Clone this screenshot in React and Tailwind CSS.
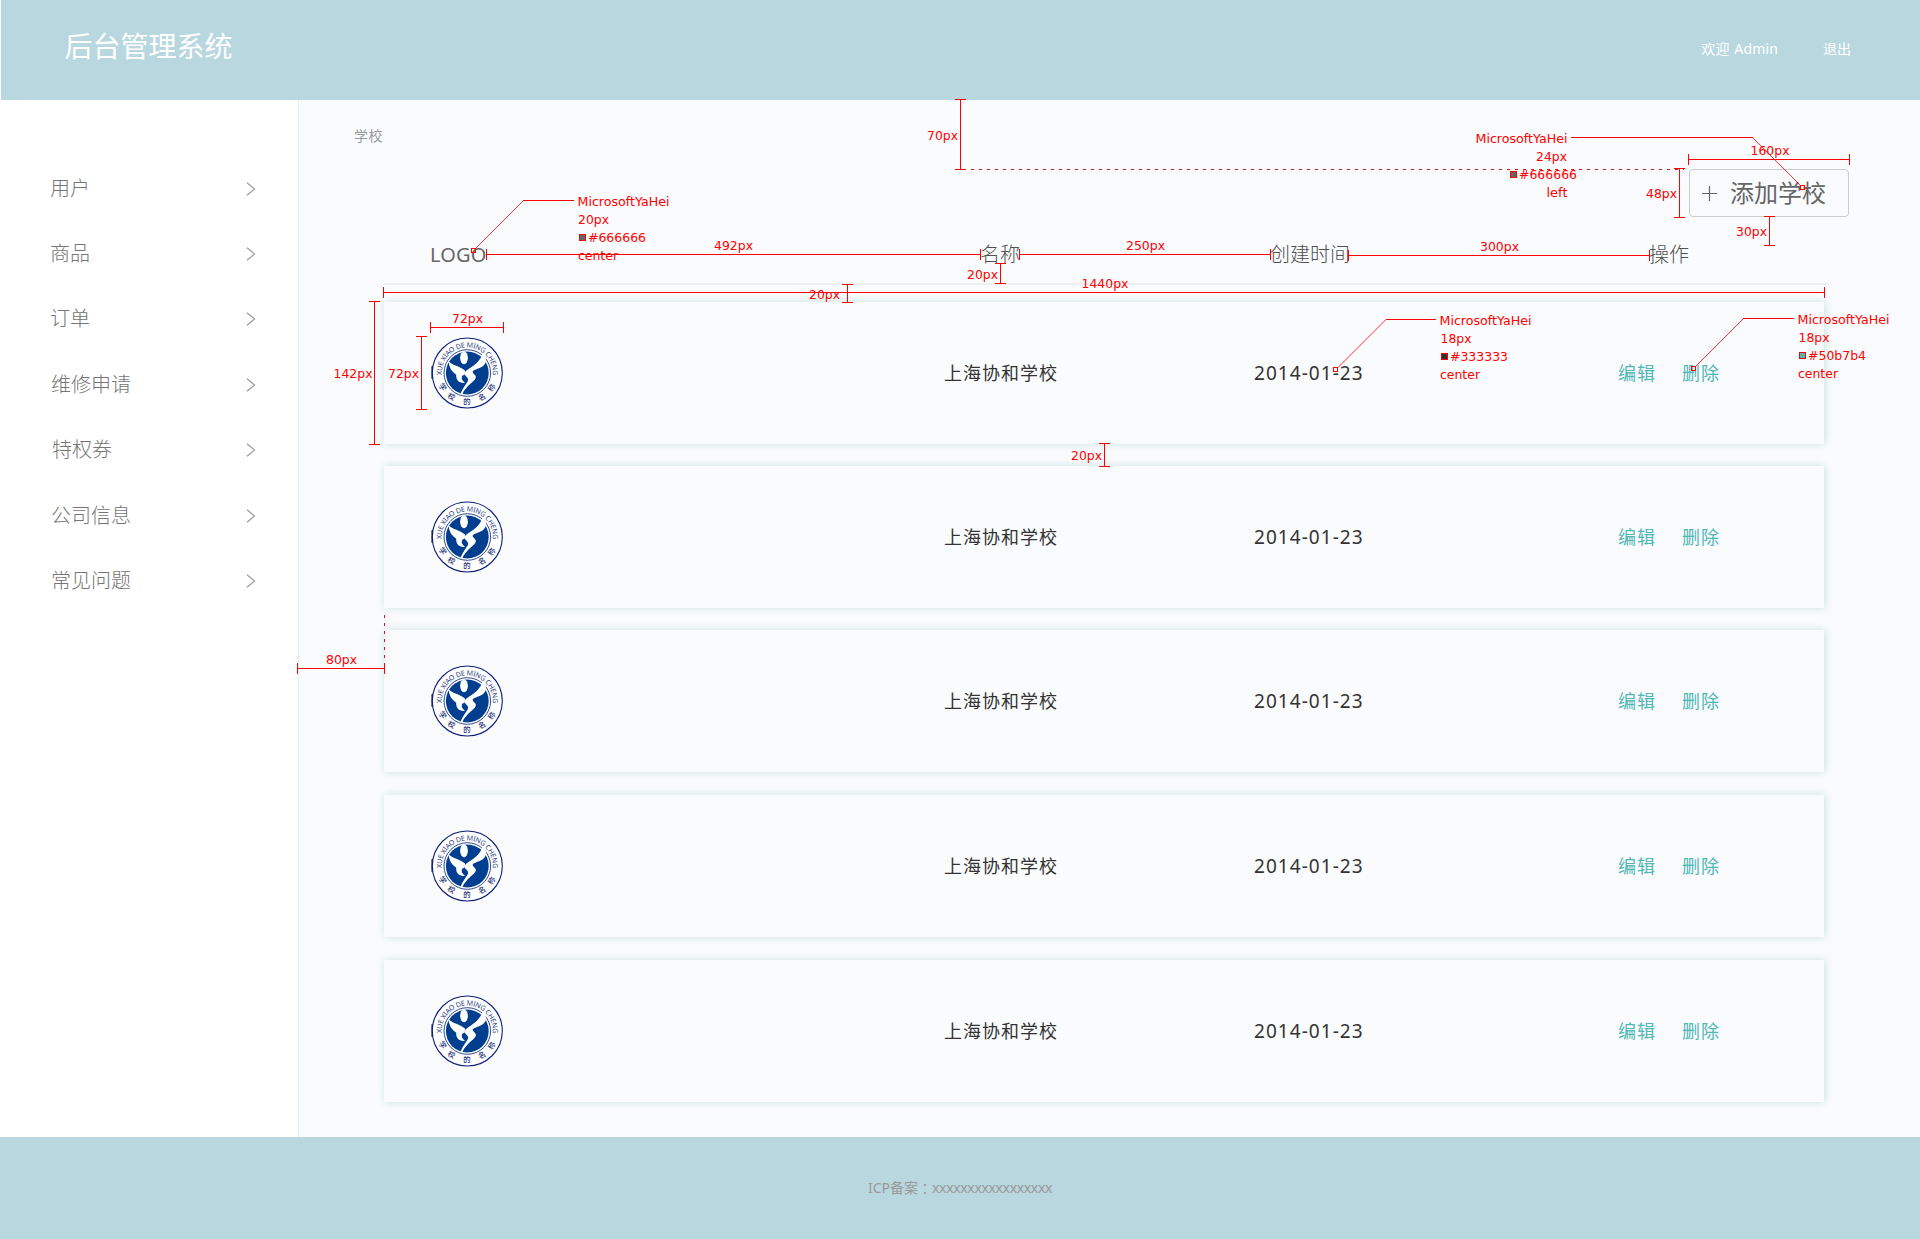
const menu = [
  { label: "用户", pad: "pl-[50px]" },
  { label: "商品", pad: "pl-[50px]" },
  { label: "订单", pad: "pl-[50px]" },
  { label: "维修申请", pad: "pl-[51px]" },
  { label: "特权券", pad: "pl-[52px]" },
  { label: "公司信息", pad: "pl-[51px]" },
  { label: "常见问题", pad: "pl-[51px]" },
];

const rows = [
  { name: "上海协和学校", date: "2014-01-23", gap: "mt-[17px]" },
  { name: "上海协和学校", date: "2014-01-23", gap: "mt-[22px]" },
  { name: "上海协和学校", date: "2014-01-23", gap: "mt-[22px]" },
  { name: "上海协和学校", date: "2014-01-23", gap: "mt-[23px]" },
  { name: "上海协和学校", date: "2014-01-23", gap: "mt-[23px]" },
];

function Chevron() {
  return (
    <svg width="10" height="14" viewBox="0 0 10 14" fill="none" stroke="#999" strokeWidth="1.1">
      <path d="M1 0.8 L8.6 7 L1 13.2" />
    </svg>
  );
}

function SchoolLogo({ id }) {
  return (
    <svg width="72" height="72" viewBox="0 0 72 72" className="block">
      <defs>
        <path id={`${id}-top`} d="M11.12 40 A25.5 25.5 0 1 1 61.48 40" />
      </defs>
      <rect x="0.4" y="29" width="1.6" height="13" rx="0.8" fill="#1c2433" />
      <circle cx="36.3" cy="36" r="35" fill="#fff" stroke="#0d1c78" strokeWidth="1.1" />
      <circle cx="36.3" cy="36" r="23.3" fill="#fff" stroke="#1b3480" strokeWidth="0.9" />
      <circle cx="36.3" cy="36" r="21.4" fill="#003f8f" />
      <ellipse cx="33" cy="20.8" rx="3.9" ry="6.4" fill="#fff" />
      <path
        fill="#fff"
        d="M17.6 24.6 C22 28.6 28.5 29.2 34 33.6 L33.8 37.4 L31.2 38.8 C30 41.5 31 44 34.2 45.8 C28.5 46.6 24.8 43.4 25.2 37.8 C23.5 36.2 18.5 34 17.6 24.6 Z"
      />
      <path
        fill="#fff"
        d="M51.5 17 C55.8 20.5 56.4 25 52.4 28.8 C49 31.6 43.5 32.4 41.8 34.2 C40.8 36.4 45.6 37.6 44.8 40.8 C43.6 45 35.5 48 31.2 57.4 L29.6 57 C31.2 51.5 35.6 47.2 37 43.6 C38.2 40.6 33.6 39.2 33.6 36.4 C34 32 47 29.5 51.5 17 Z"
      />
      <text fill="#27407f" fontFamily="'Noto Sans', sans-serif" fontSize="7" letterSpacing="-0.22">
        <textPath href={`#${id}-top`} startOffset="50%" textAnchor="middle">
          XUE XIAO DE MING CHENG
        </textPath>
      </text>
      <g fill="#1b2f78" fontFamily="'Noto Sans CJK SC', sans-serif" fontSize="7.4" fontWeight="500" textAnchor="middle">
        <text transform="translate(12 50.4) rotate(58) translate(0 2.6)">学</text>
        <text transform="translate(21 60) rotate(28) translate(0 2.6)">校</text>
        <text transform="translate(36.4 64.2) translate(0 2.6)">的</text>
        <text transform="translate(51.5 60) rotate(-28) translate(0 2.6)">名</text>
        <text transform="translate(61 50.2) rotate(-58) translate(0 2.6)">称</text>
      </g>
    </svg>
  );
}

/* Horizontal measure with end ticks */
function HMeasure({ x1, x2, y, t = y - 5, b = y + 6 }) {
  return <path d={`M${x1} ${y + 0.5}H${x2 + 1}M${x1 + 0.5} ${t}V${b}M${x2 + 0.5} ${t}V${b}`} />;
}

/* Vertical measure with end ticks */
function VMeasure({ x, y1, y2 }) {
  return <path d={`M${x + 0.5} ${y1}V${y2 + 1}M${x - 5} ${y1 + 0.5}H${x + 6}M${x - 5} ${y2 + 0.5}H${x + 6}`} />;
}

const labels = [
  ["70px", 927, 140, 31],
  ["160px", 1750.5, 155, 39],
  ["48px", 1646, 198, 31],
  ["30px", 1736, 236, 31],
  ["492px", 714, 250, 39],
  ["250px", 1126, 250, 39],
  ["300px", 1480, 251, 39],
  ["20px", 967, 279, 31],
  ["1440px", 1081.5, 288, 47],
  ["20px", 809, 299, 31],
  ["72px", 452, 323, 31],
  ["142px", 333.5, 378, 39],
  ["72px", 388, 378, 31],
  ["20px", 1071, 460, 31],
  ["80px", 326, 664, 31],
  ["MicrosoftYaHei", 577.5, 206, 92],
  ["20px", 578, 224, 31],
  ["#666666", 588, 242, 58],
  ["center", 578, 260, 40],
  ["MicrosoftYaHei", 1475.5, 143, 92],
  ["24px", 1536, 161, 31],
  ["#666666", 1519, 179, 58],
  ["left", 1546.5, 197, 21],
  ["MicrosoftYaHei", 1439.5, 325, 92],
  ["18px", 1440.5, 343, 31],
  ["#333333", 1450, 361, 58],
  ["center", 1440, 379, 40],
  ["MicrosoftYaHei", 1797.5, 324, 92],
  ["18px", 1798.5, 342, 31],
  ["#50b7b4", 1808, 360, 58],
  ["center", 1798, 378, 40],
];

function Annotations() {
  return (
    <svg className="absolute top-0 left-0 pointer-events-none" width="1920" height="1239" viewBox="0 0 1920 1239">
      <g stroke="#f00" strokeWidth="1" fill="none" shapeRendering="crispEdges">
        <VMeasure x={960} y1={99} y2={169} />
        <HMeasure x1={1688} x2={1849} y={159} />
        <VMeasure x={1679} y1={168} y2={217} />
        <VMeasure x={1769} y1={216} y2={245} />
        <HMeasure x1={486} x2={980} y={254} />
        <HMeasure x1={1019} x2={1270} y={254} />
        <HMeasure x1={1348} x2={1649} y={255} />
        <VMeasure x={1000} y1={263} y2={283} />
        <HMeasure x1={383} x2={1824} y={292} />
        <VMeasure x={847} y1={284} y2={302} />
        <HMeasure x1={430} x2={503} y={327} />
        <VMeasure x={421} y1={336} y2={409} />
        <VMeasure x={374} y1={301} y2={444} />
        <VMeasure x={1104} y1={443} y2={466} />
        <HMeasure x1={297} x2={384} y={668} />
        <path d="M523 200.5H574M1571 137.5H1753M1386 319.5H1436M1743 318.5H1794" />
        <path stroke="#d11" strokeDasharray="3 5" d="M963 169.5H1684M384.5 615V664" />
        <rect x="471.5" y="248.5" width="4" height="4" />
        <rect x="1800.5" y="185.5" width="4" height="4" />
        <rect x="1333.5" y="367.5" width="4" height="4" />
        <rect x="1691.5" y="366.5" width="4" height="4" />
        <rect x="579.5" y="234.5" width="6" height="6" fill="#666" />
        <rect x="1510.5" y="171.5" width="6" height="6" fill="#666" />
        <rect x="1441.5" y="353.5" width="6" height="6" fill="#333" />
        <rect x="1799.5" y="352.5" width="6" height="6" fill="#50b7b4" />
      </g>
      <path stroke="#f00" strokeWidth="0.8" fill="none" d="M476 248L523.5 200.5M1752.5 137.5L1801 186M1338 367.5L1386 319.5M1696 366L1743.5 318.5" />
      <g fill="#f00" fontFamily="'DejaVu Sans', sans-serif" fontSize="12">
        {labels.map(([text, x, y, w], i) => (
          <text key={i} x={x} y={y} textLength={w} lengthAdjust="spacingAndGlyphs">
            {text}
          </text>
        ))}
      </g>
    </svg>
  );
}

export default function App() {
  return (
    <div className="relative flex h-[1239px] w-[1920px] flex-col overflow-hidden bg-white font-['Noto_Sans','Noto_Sans_CJK_SC',sans-serif]">
      <header className="ml-px flex h-[100px] shrink-0 justify-between bg-[#b9d7df] pr-[69px] pl-[63.5px] text-white">
        <h1 className="mt-[25px] text-[28px] leading-[42px] font-normal">后台管理系统</h1>
        <div className="mt-[37px] flex text-sm leading-6">
          <span className="mr-[45px] tracking-[0.15px] [word-spacing:1px]">欢迎 Admin</span>
          <a>退出</a>
        </div>
      </header>

      <div className="flex h-[1037px] shrink-0">
        <nav className="flex w-[298px] shrink-0 flex-col pt-[56px]">
          {menu.map((m) => (
            <a key={m.label} className={`flex h-[65.4px] items-center justify-between pr-[42px] text-xl font-light text-[#757575] ${m.pad}`}>
              <span>{m.label}</span>
              <Chevron />
            </a>
          ))}
        </nav>

        <main className="flex grow flex-col border-l border-[#e4efef] bg-[#fafbfd]">
          <div className="flex h-[118px] justify-between pr-[71px] pl-[55px]">
            <span className="mt-[24px] text-sm leading-6 tracking-[0.4px] text-[#999]">学校</span>
            <button className="mt-[69px] flex h-12 w-[160px] items-center rounded border border-[#ccc] pl-3 text-2xl text-[#666]">
              <svg width="15" height="15" viewBox="0 0 15 15" stroke="#666" strokeWidth="1.2" className="mr-[13px]">
                <path d="M7.5 0V15M0 7.5H15" />
              </svg>
              添加学校
            </button>
          </div>

          <div className="ml-[84px] flex h-[67px] w-[1446px] items-start border-b-2 border-[#eeeff1] pt-[22px] text-xl leading-[30px] text-[#505050]">
            <span className="w-[597px] pl-[47px] tracking-[0.2px] text-[#666]">LOGO</span>
            <span className="w-[290px] font-light">名称</span>
            <span className="w-[379px] font-light">创建时间</span>
            <span className="font-light">操作</span>
          </div>

          <div className="ml-[85px] flex w-[1440px] flex-col">
            {rows.map((r, i) => (
              <div
                key={i}
                className={`flex h-[142px] items-center bg-[#fafbfd] text-lg tracking-[1px] text-[#333] shadow-[1px_0_8px_rgba(80,160,145,0.28)] ${r.gap}`}
              >
                <div className="w-[560px] pl-[47px]">
                  <SchoolLogo id={`logo-${i}`} />
                </div>
                <span className="w-[310px]">{r.name}</span>
                <span className="w-[364px] pt-0.5 text-[19px] tracking-[1.05px]">{r.date}</span>
                <a className="w-16 text-[#50b7b4]">编辑</a>
                <a className="text-[#50b7b4]">删除</a>
              </div>
            ))}
          </div>
        </main>
      </div>

      <footer className="flex h-[102px] shrink-0 justify-center bg-[#b9d7df] pt-[39px] text-sm leading-6 text-[#999]">
        <span>ICP备案</span>
        <span className="font-['Noto_Sans_CJK_TC']">：</span>
        <span className="tracking-[-0.35px]">xxxxxxxxxxxxxxxxx</span>
      </footer>

      <Annotations />
    </div>
  );
}
